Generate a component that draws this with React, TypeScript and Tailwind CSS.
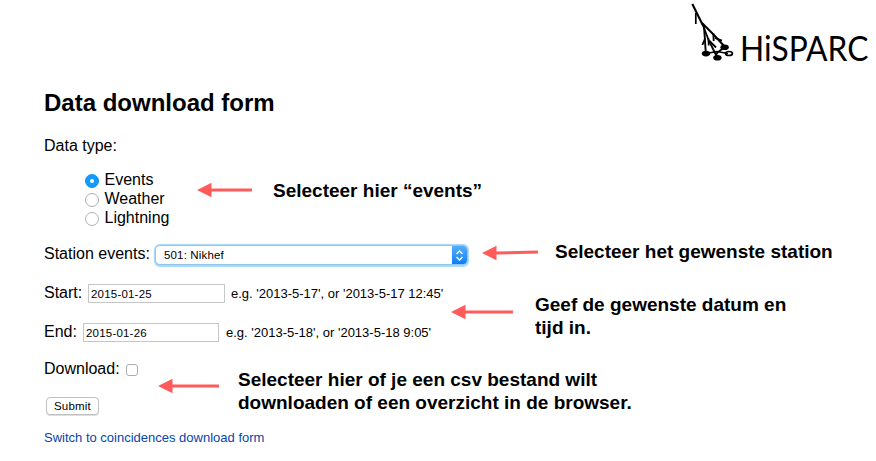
import type { ReactNode } from "react";

function Arrow({ width, tilt = 0 }: { width: number; tilt?: number }) {
  return (
    <svg width={width} height={16} viewBox={`0 0 ${width} 16`} className="block shrink-0 overflow-visible">
      <line x1={13} y1={8} x2={width} y2={8 - tilt} stroke="#ff5b5b" strokeWidth={3} />
      <polygon points={`0,8 14.5,0.7 14.5,15.3`} fill="#ff5b5b" />
    </svg>
  );
}

function Note({ children, className = "" }: { children: ReactNode; className?: string }) {
  return (
    <p className={`shrink-0 whitespace-nowrap text-[19px] leading-[23px] font-bold ${className}`}>{children}</p>
  );
}

function Radio({ label, checked = false }: { label: string; checked?: boolean }) {
  return (
    <label className="flex h-[19px] items-start gap-[5.5px]">
      <span
        className={`mt-[4px] flex size-[14px] shrink-0 items-center justify-center rounded-full border ${
          checked ? "border-[#1193f5] bg-[#129bfb]" : "border-[#b0b0b0] bg-white"
        }`}
      >
        {checked && <span className="size-1 rounded-full bg-white" />}
      </span>
      <span className="leading-[19px]">{label}</span>
    </label>
  );
}

function Logo() {
  return (
    <div className="flex h-[88px] items-start">
      <svg width={48} height={64} viewBox="0 0 48 64" className="block shrink-0" fill="none" stroke="#000">
        <path d="M4.3 4 L15 25.5" strokeWidth={2.1} />
        <path d="M7.8 13 V24" strokeWidth={1.7} />
        <path d="M14 23 L21 41 L29 57" strokeWidth={1.8} />
        <path d="M14 23 L26 35 L37 47" strokeWidth={2} />
        <path d="M16 26 L17.8 53" strokeWidth={1.9} />
        <path d="M14.3 45 L17.3 38 M20.8 45.5 L20.3 38 M21.5 41 L28 47.5 M25.3 33.5 L25.7 41 M27 38 L34 40.6" strokeWidth={1.8} />
        <path d="M18 53.5 L29 51.5 L40 53.5 M28 55 Q30 51 37 47.5" strokeWidth={1.7} />
        <ellipse cx={18} cy={53.6} rx={4.2} ry={2.8} fill="#000" stroke="none" />
        <ellipse cx={36.6} cy={47.3} rx={4.2} ry={2.8} fill="#000" stroke="none" />
        <ellipse cx={29.4} cy={57.7} rx={4.2} ry={2.8} fill="#000" stroke="none" />
        <ellipse cx={41} cy={53.5} rx={3.4} ry={2} strokeWidth={1.7} />
      </svg>
      <span className="mt-[28px] ml-[4px] w-[136px] shrink-0 origin-left scale-x-[0.933] font-[Lato,sans-serif] text-[34px] leading-[40px] whitespace-nowrap">
        HiSPARC
      </span>
    </div>
  );
}

export default function App() {
  return (
    <main className="h-[461px] w-[876px] overflow-hidden bg-white pl-[44px] font-['Liberation_Sans',Arial,sans-serif] text-[16px] text-black">
      <header className="pl-[644px]">
        <Logo />
      </header>
      <h1 className="h-[48px] text-[24px] leading-[29px] font-bold whitespace-nowrap">Data download form</h1>
      <p className="h-[34px] leading-[19px]">Data type:</p>

      <section className="flex h-[74px]">
        <div className="w-[153px] pl-[41px]">
          <Radio label="Events" checked />
          <Radio label="Weather" />
          <Radio label="Lightning" />
        </div>
        <div className="mt-[12px]">
          <Arrow width={55} />
        </div>
        <Note className="mt-[9px] ml-[21px]">Selecteer hier “events”</Note>
      </section>

      <section className="flex h-[39px]">
        <span className="w-[112px] shrink-0 leading-[19px]">Station events:</span>
        <div className="mt-[2px] flex h-[18px] w-[311px] shrink-0 justify-between rounded-[4px] bg-white shadow-[0_0_0_0.5px_#7fb4da,0_0.5px_1px_2px_#a6d7fb]">
          <span className="pl-[8px] text-[11.5px] leading-[19px] tracking-[0.15px]">501: Nikhef</span>
          <span className="flex w-[15px] items-center justify-center rounded-r-[4px] bg-linear-to-b from-[#52aef8] to-[#0a7df6]">
            <svg width={9} height={11} viewBox="0 0 9 11" fill="none" stroke="#fff" strokeWidth={1.3}>
              <path d="M1.5 4 L4.5 1 L7.5 4 M1.5 7 L4.5 10 L7.5 7" />
            </svg>
          </span>
        </div>
        <div className="mt-px ml-[15px]">
          <Arrow width={56} tilt={1} />
        </div>
        <Note className="-mt-[4px] ml-[17px]">Selecteer het gewenste station</Note>
      </section>

      <section className="flex h-[76px]">
        <div className="w-[407px] shrink-0">
          <div className="flex h-[39px]">
            <span className="w-[44px] leading-[19px]">Start:</span>
            <span className="mt-px h-[19px] w-[137px] border border-[#c6c6c6] pl-[2px] text-[11.5px] leading-[18px] tracking-[0.2px]">2015-01-25</span>
            <span className="ml-[6px] text-[13px] leading-[21px] whitespace-nowrap">e.g. '2013-5-17', or '2013-5-17 12:45'</span>
          </div>
          <div className="flex">
            <span className="w-[39px] leading-[19px]">End:</span>
            <span className="mt-px h-[19px] w-[136px] border border-[#c6c6c6] pl-[2px] text-[11.5px] leading-[18px] tracking-[0.2px]">2015-01-26</span>
            <span className="ml-[7px] text-[13px] leading-[21px] whitespace-nowrap">e.g. '2013-5-18', or '2013-5-18 9:05'</span>
          </div>
        </div>
        <div className="mt-[21px]">
          <Arrow width={62} />
        </div>
        <Note className="mt-[10px] ml-[22px]">
          Geef de gewenste datum en
          <br />
          tijd in.
        </Note>
      </section>

      <section className="flex h-[69px]">
        <div className="w-[114px] shrink-0">
          <label className="flex h-[38px]">
            <span className="w-[82px] leading-[19px]">Download:</span>
            <span className="mt-[5px] size-[12px] rounded-[3px] border border-[#acacac] bg-white" />
          </label>
          <button className="ml-[2px] block h-[18px] w-[53px] rounded-[4px] border border-[#c0c0c0] bg-white text-[11.5px] leading-[16px] tracking-[0.2px] shadow-[0_1px_0_#ddd]">
            Submit
          </button>
        </div>
        <div className="mt-[19px]">
          <Arrow width={61} />
        </div>
        <Note className="mt-[9px] ml-[19px]">
          Selecteer hier of je een csv bestand wilt
          <br />
          downloaden of een overzicht in de browser.
        </Note>
      </section>

      <a className="block text-[13px] leading-[19px] text-[#0645ad]">Switch to coincidences download form</a>
    </main>
  );
}
